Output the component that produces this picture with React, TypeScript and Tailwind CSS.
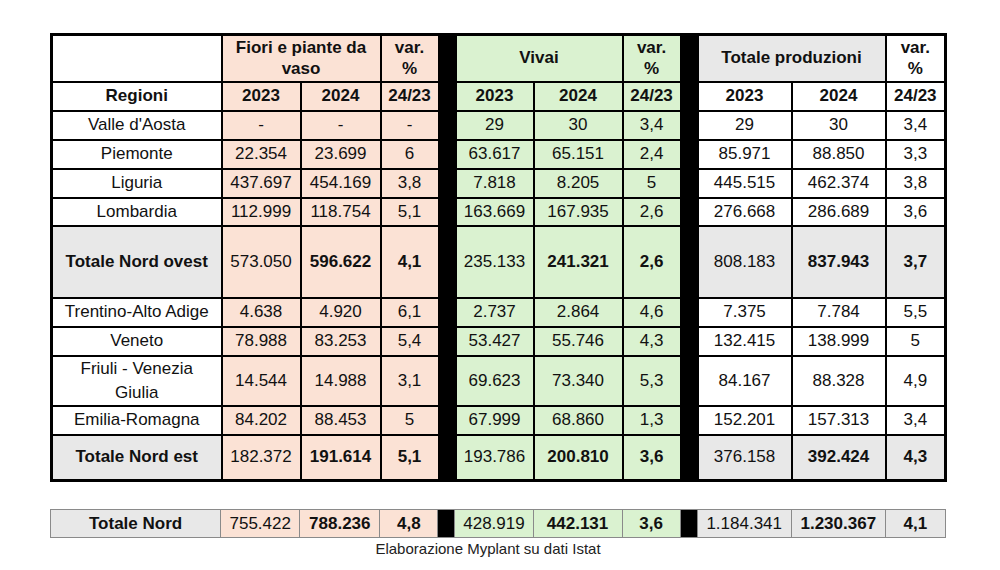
import React from 'react';

type Row = {
  name: string;
  h: string;
  total?: boolean;
  wrap?: boolean;
  f: string[];
  v: string[];
  t: string[];
};

const rows: Row[] = [
  { name: "Valle d'Aosta", h: 'h-[29px]', f: ['-', '-', '-'], v: ['29', '30', '3,4'], t: ['29', '30', '3,4'] },
  { name: 'Piemonte', h: 'h-[29px]', f: ['22.354', '23.699', '6'], v: ['63.617', '65.151', '2,4'], t: ['85.971', '88.850', '3,3'] },
  { name: 'Liguria', h: 'h-[29px]', f: ['437.697', '454.169', '3,8'], v: ['7.818', '8.205', '5'], t: ['445.515', '462.374', '3,8'] },
  { name: 'Lombardia', h: 'h-[28px]', f: ['112.999', '118.754', '5,1'], v: ['163.669', '167.935', '2,6'], t: ['276.668', '286.689', '3,6'] },
  { name: 'Totale Nord ovest', h: 'h-[72px]', total: true, f: ['573.050', '596.622', '4,1'], v: ['235.133', '241.321', '2,6'], t: ['808.183', '837.943', '3,7'] },
  { name: 'Trentino-Alto Adige', h: 'h-[29px]', f: ['4.638', '4.920', '6,1'], v: ['2.737', '2.864', '4,6'], t: ['7.375', '7.784', '5,5'] },
  { name: 'Veneto', h: 'h-[29px]', f: ['78.988', '83.253', '5,4'], v: ['53.427', '55.746', '4,3'], t: ['132.415', '138.999', '5'] },
  { name: 'Friuli - Venezia Giulia', h: 'h-[47px]', wrap: true, f: ['14.544', '14.988', '3,1'], v: ['69.623', '73.340', '5,3'], t: ['84.167', '88.328', '4,9'] },
  { name: 'Emilia-Romagna', h: 'h-[29px]', f: ['84.202', '88.453', '5'], v: ['67.999', '68.860', '1,3'], t: ['152.201', '157.313', '3,4'] },
  { name: 'Totale Nord est', h: 'h-[46px]', total: true, f: ['182.372', '191.614', '5,1'], v: ['193.786', '200.810', '3,6'], t: ['376.158', '392.424', '4,3'] },
];

const widths = [170, 79, 80, 58, 17, 78, 89, 58, 17, 94, 94, 60];

const pink = 'bg-[#fbe2d5]';
const green = 'bg-[#daf2d0]';
const gray = 'bg-[#e8e8e8]';

function Cols() {
  return (
    <colgroup>
      {widths.map((w, i) => (
        <col key={i} style={{ width: w }} />
      ))}
    </colgroup>
  );
}

export default function App() {
  const td = 'border-2 border-black text-center align-middle px-0 py-0';
  const td2 = 'border border-[#8a8a8a] text-center align-middle px-0 py-0';

  return (
    <div className="w-[1000px] h-[570px] bg-white pl-[50px] pt-[33px] font-['Liberation_Sans',Arial,sans-serif] text-[17px] leading-[22px] text-[#111]">
      <table className="w-[896px] table-fixed border-collapse border-[3px] border-black">
        <Cols />
        <tbody>
          <tr className="h-[47px] font-bold">
            <td className={`${td} bg-white`} />
            <td colSpan={2} className={`${td} ${pink} leading-[21px]`}>
              Fiori e piante da
              <br />
              vaso
            </td>
            <td className={`${td} ${pink} leading-[21px]`}>
              var.
              <br />%
            </td>
            <td className={`${td} bg-black`} />
            <td colSpan={2} className={`${td} ${green}`}>Vivai</td>
            <td className={`${td} ${green} leading-[21px]`}>
              var.
              <br />%
            </td>
            <td className={`${td} bg-black`} />
            <td colSpan={2} className={`${td} ${gray}`}>Totale produzioni</td>
            <td className={`${td} bg-white leading-[21px]`}>
              var.
              <br />%
            </td>
          </tr>
          <tr className="h-[29px] font-bold">
            <td className={`${td} bg-white`}>Regioni</td>
            <td className={`${td} ${pink}`}>2023</td>
            <td className={`${td} ${pink}`}>2024</td>
            <td className={`${td} ${pink}`}>24/23</td>
            <td className={`${td} bg-black`} />
            <td className={`${td} ${green}`}>2023</td>
            <td className={`${td} ${green}`}>2024</td>
            <td className={`${td} ${green}`}>24/23</td>
            <td className={`${td} bg-black`} />
            <td className={`${td} bg-white`}>2023</td>
            <td className={`${td} bg-white`}>2024</td>
            <td className={`${td} bg-white`}>24/23</td>
          </tr>
          {rows.map((r) => {
            const tBg = r.total ? gray : 'bg-white';
            const b = r.total ? 'font-bold' : '';
            return (
              <tr key={r.name} className={r.h}>
                <td className={`${td} ${tBg} ${b} px-1 ${r.wrap ? 'leading-[24px]' : ''}`}>{r.name}</td>
                <td className={`${td} ${pink}`}>{r.f[0]}</td>
                <td className={`${td} ${pink} ${b}`}>{r.f[1]}</td>
                <td className={`${td} ${pink} ${b}`}>{r.f[2]}</td>
                <td className={`${td} bg-black`} />
                <td className={`${td} ${green}`}>{r.v[0]}</td>
                <td className={`${td} ${green} ${b}`}>{r.v[1]}</td>
                <td className={`${td} ${green} ${b}`}>{r.v[2]}</td>
                <td className={`${td} bg-black`} />
                <td className={`${td} ${tBg}`}>{r.t[0]}</td>
                <td className={`${td} ${tBg} ${b}`}>{r.t[1]}</td>
                <td className={`${td} ${tBg} ${b}`}>{r.t[2]}</td>
              </tr>
            );
          })}
        </tbody>
      </table>

      <table className="mt-[27px] w-[896px] table-fixed border-collapse border border-[#8a8a8a]">
        <Cols />
        <tbody>
          <tr className="h-[28px]">
            <td className={`${td2} ${gray} font-bold`}>Totale Nord</td>
            <td className={`${td2} ${pink}`}>755.422</td>
            <td className={`${td2} ${pink} font-bold`}>788.236</td>
            <td className={`${td2} ${pink} font-bold`}>4,8</td>
            <td className={`${td2} bg-black`} />
            <td className={`${td2} ${green}`}>428.919</td>
            <td className={`${td2} ${green} font-bold`}>442.131</td>
            <td className={`${td2} ${green} font-bold`}>3,6</td>
            <td className={`${td2} bg-black`} />
            <td className={`${td2} ${gray}`}>1.184.341</td>
            <td className={`${td2} ${gray} font-bold`}>1.230.367</td>
            <td className={`${td2} ${gray} font-bold`}>4,1</td>
          </tr>
        </tbody>
      </table>

      <div className="w-[896px] pr-[20px] pt-[2px] text-center text-[15px] leading-[18px] text-[#222]">
        Elaborazione Myplant su dati Istat
      </div>
    </div>
  );
}
